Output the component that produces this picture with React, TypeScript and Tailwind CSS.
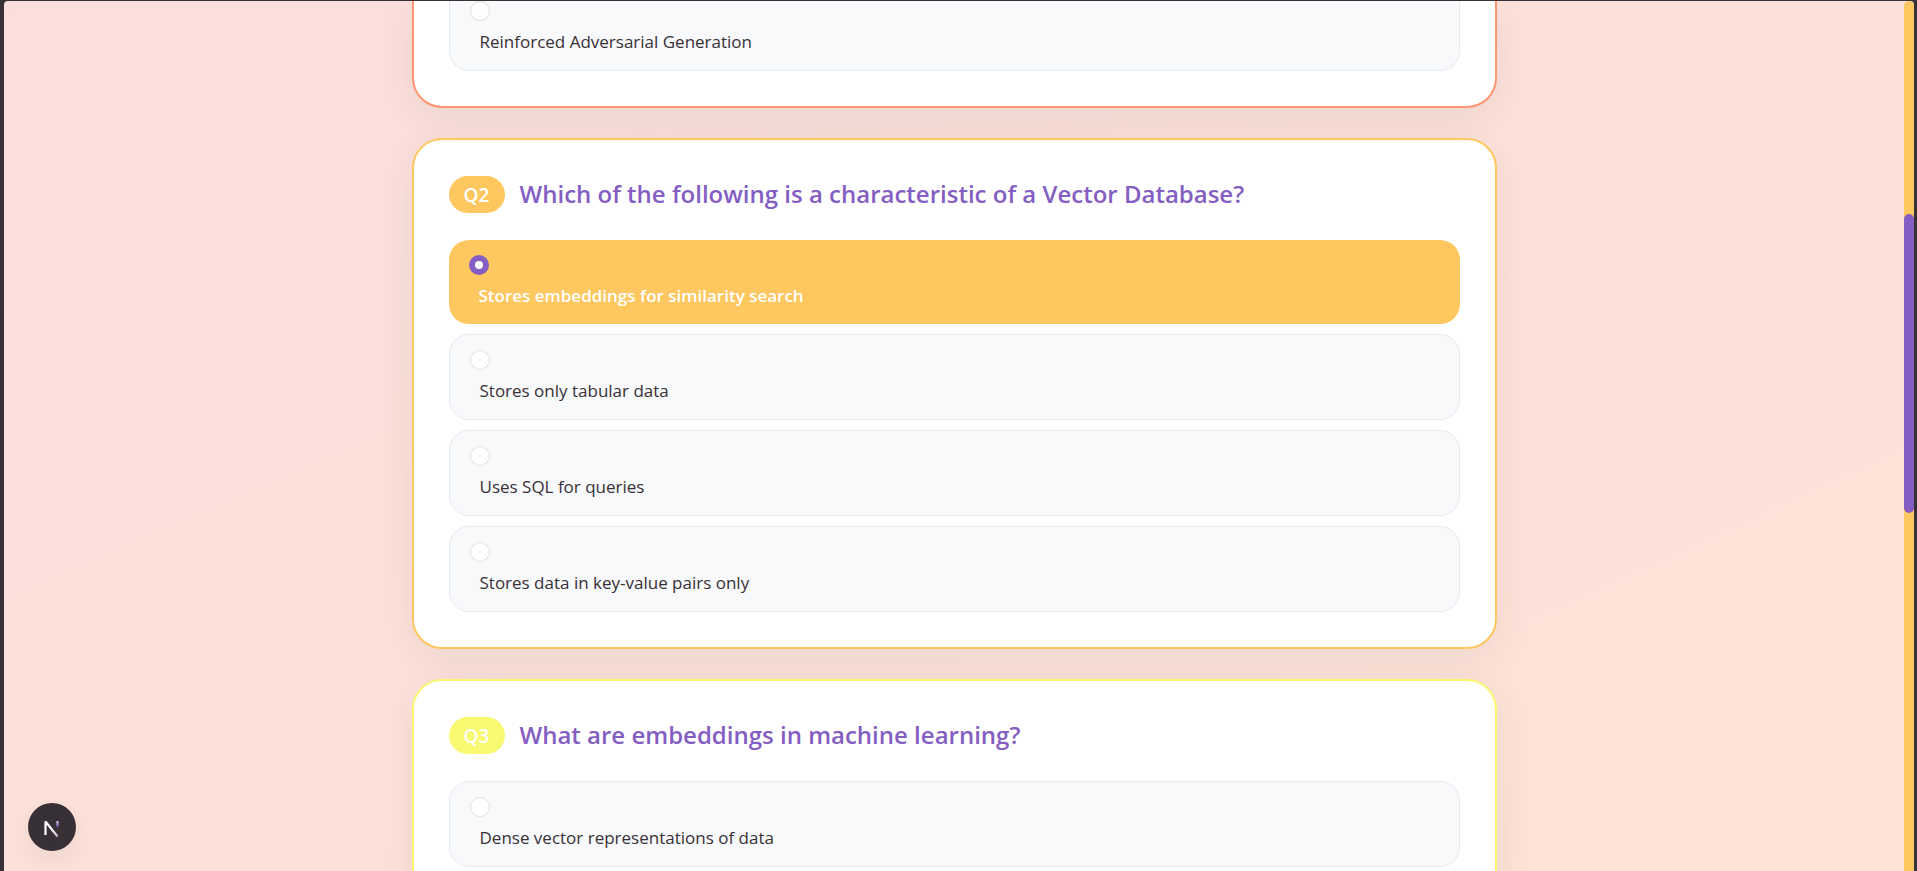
import React, { useState } from 'react';
import clsx from 'clsx';

interface Question {
  id: number;
  title: string;
  options: string[];
  // only the tail of the first question is scrolled into view
  partial?: boolean;
}

const questions: Question[] = [
  { id: 1, title: '', options: ['Reinforced Adversarial Generation'], partial: true },
  {
    id: 2,
    title: 'Which of the following is a characteristic of a Vector Database?',
    options: [
      'Stores embeddings for similarity search',
      'Stores only tabular data',
      'Uses SQL for queries',
      'Stores data in key-value pairs only',
    ],
  },
  {
    id: 3,
    title: 'What are embeddings in machine learning?',
    options: ['Dense vector representations of data'],
  },
];

const cardBorders: Record<number, string> = {
  1: 'border-[#FF9671]',
  2: 'border-[#FFC75F]',
  3: 'border-[#F9F871]',
};

const badgeColors: Record<number, string> = {
  1: 'bg-[#FF9671]',
  2: 'bg-[#FFC75F]',
  3: 'bg-[#F9F871]',
};

interface OptionProps {
  question: Question;
  text: string;
  checked: boolean;
  onSelect: () => void;
}

const Option: React.FC<OptionProps> = ({ question, text, checked, onSelect }) => (
  <label
    className={clsx(
      'flex cursor-pointer flex-col gap-[10px] px-5 pb-[17px]',
      question.partial ? 'rounded-b-[20px]' : 'rounded-[20px] pt-[15px]',
      checked ? 'bg-[#FFC75F] font-semibold text-white' : 'border border-[#e6ebf0] bg-[#f8f9fb] text-[#373036]',
      question.partial && 'border-t-0'
    )}
  >
    <input
      type="radio"
      name={`q${question.id}`}
      checked={checked}
      onChange={onSelect}
      className="size-5 appearance-none rounded-full border border-[#e6dcdc] bg-white checked:border-[6px] checked:border-[#845EC2]"
    />
    <span className="ml-[10px] text-[17px] leading-[22px]">{text}</span>
  </label>
);

const QuestionCard: React.FC<{ question: Question; initial: string }> = ({ question, initial }) => {
  const [answer, setAnswer] = useState(initial);

  return (
    <section
      className={clsx(
        'border-2 bg-white px-[35px] pb-[35px] shadow-[0_10px_40px_rgba(20,50,30,0.07)]',
        question.partial ? 'rounded-b-[30px] border-t-0' : 'rounded-[30px] pt-[35px]',
        cardBorders[question.id]
      )}
    >
      {question.title && (
        <div className="mb-[26px] flex h-[39px] items-center gap-[15px]">
          <span
            className={clsx(
              'flex h-[37px] w-14 items-center justify-center rounded-[20px] pt-0.5 text-[19px] font-semibold text-white',
              badgeColors[question.id]
            )}
          >
            Q{question.id}
          </span>
          <h2 className="pb-0.5 text-[24px] font-semibold text-[#845EC2]">{question.title}</h2>
        </div>
      )}
      <div className="flex flex-col gap-[10px]">
        {question.options.map((text) => (
          <Option
            key={text}
            question={question}
            text={text}
            checked={answer === text}
            onSelect={() => setAnswer(text)}
          />
        ))}
      </div>
    </section>
  );
};

const NextBadge: React.FC = () => (
  <button
    aria-label="Open dev tools"
    className="absolute bottom-5 left-6 size-12 rounded-full bg-[#373036] shadow-[0_10px_30px_rgba(20,50,30,0.07)]"
  >
    <svg viewBox="0 0 48 48" className="size-12" fill="none">
      <defs>
        <linearGradient id="diag" x1="24" y1="26" x2="31" y2="35" gradientUnits="userSpaceOnUse">
          <stop stopColor="#fff" />
          <stop offset="1" stopColor="#e6b8f0" stopOpacity="0.8" />
        </linearGradient>
        <linearGradient id="stem" x1="29" y1="17" x2="29" y2="25" gradientUnits="userSpaceOnUse">
          <stop stopColor="#f0d8fa" />
          <stop offset="0.6" stopColor="#a583dc" />
          <stop offset="1" stopColor="#845EC2" stopOpacity="0.1" />
        </linearGradient>
      </defs>
      <path d="M29.5 33.5 L17.5 18.5 V32" stroke="url(#diag)" strokeWidth="2.2" strokeLinejoin="bevel" />
      <path d="M29.5 18 V25" stroke="url(#stem)" strokeWidth="2.2" />
    </svg>
  </button>
);

export default function App() {
  return (
    <div className="h-screen overflow-hidden bg-[#373036] pt-px pr-[3px] pl-1 font-['Open_Sans','Segoe_UI',sans-serif]">
      <div className="relative flex h-full overflow-hidden rounded-t-[4px] bg-gradient-to-br from-[#fbdfdd] to-[#fee3d7]">
        <main className="min-w-0 flex-1 overflow-hidden">
          <div className="mx-auto flex max-w-[1085px] flex-col gap-[30px]">
            {questions.map((q) => (
              <QuestionCard
                key={q.id}
                question={q}
                initial={q.id === 2 ? 'Stores embeddings for similarity search' : ''}
              />
            ))}
          </div>
        </main>

        {/* Scroll track */}
        <div className="w-[10px] shrink-0 rounded-t-[5px] bg-[#FFC75F] pt-[213px]">
          <div className="h-[299px] rounded-[5px] bg-[#845EC2]" />
        </div>

        <NextBadge />
      </div>
    </div>
  );
}
